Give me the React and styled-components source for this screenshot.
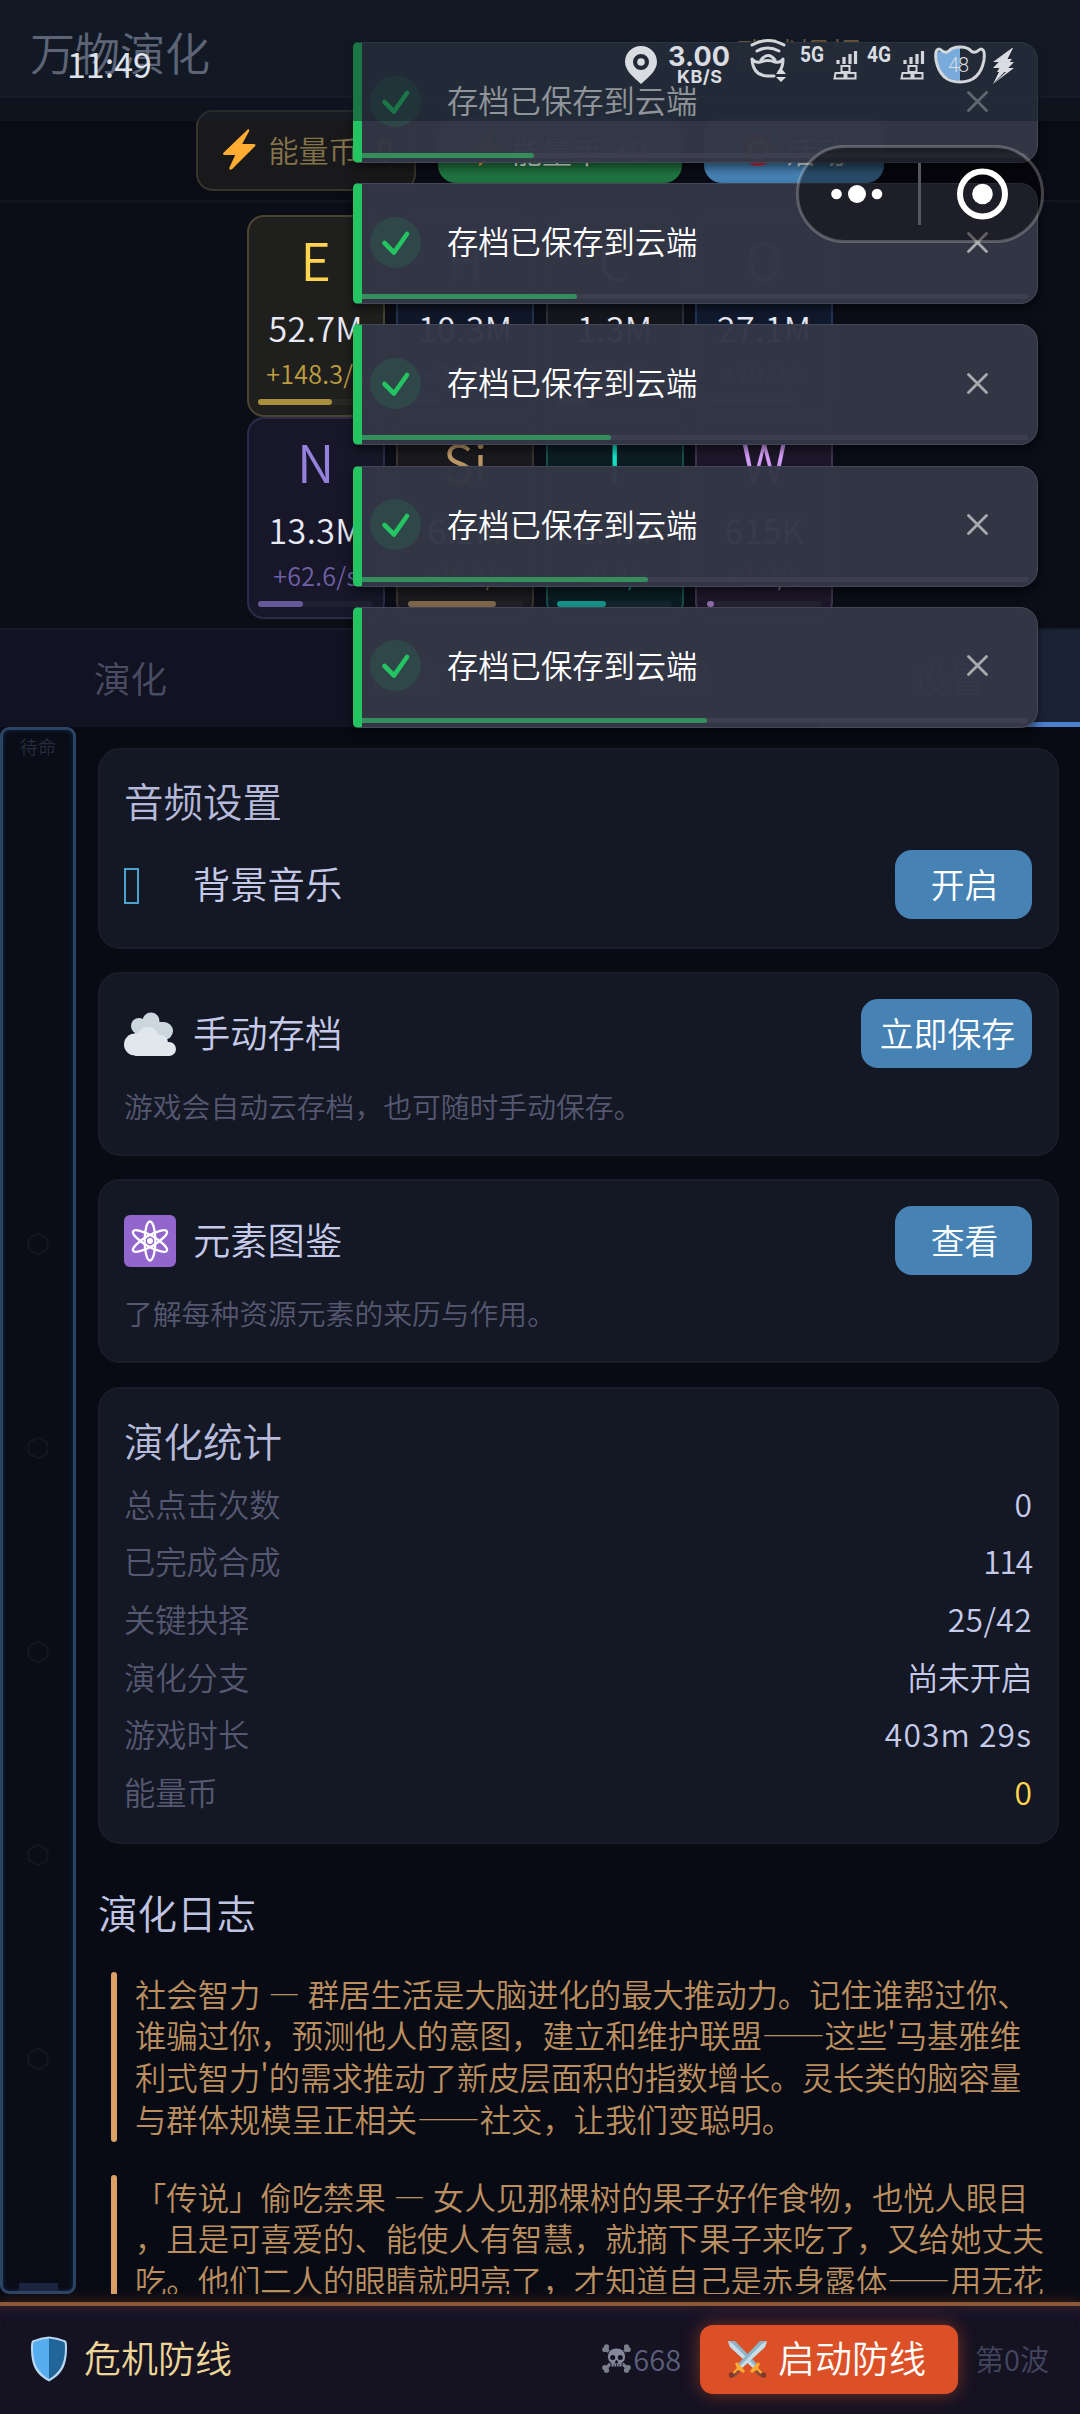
import React from "react";
import styled, { createGlobalStyle } from "styled-components";

const GlobalStyle = createGlobalStyle`
  * {
    box-sizing: border-box;
  }

  body {
    margin: 0;
    background: #080b14;
    font-family: "Noto Sans CJK SC", "Noto Sans", sans-serif;
    font-weight: 350;
  }
`;

const Page = styled.div`
  position: relative;
  display: flex;
  flex-direction: column;
  width: 1080px;
  height: 2414px;
  overflow: hidden;
  background: #080b14;
  color: #c5cae9;
`;

const Header = styled.header`
  display: flex;
  flex: none;
  align-items: center;
  justify-content: space-between;
  height: 98px;
  padding: 8px 218px 0 30px;
  background: #121421;
  border-bottom: 2px solid #191c2b;
`;

const Title = styled.div`
  font-size: 45px;
  line-height: 60px;
  color: #a0a3ba;
`;

const HeaderNote = styled.div`
  font-size: 32px;
  line-height: 44px;
  color: #b48646;
`;

const PillRow = styled.div`
  display: flex;
  flex: none;
  align-items: center;
  gap: 22px;
  height: 104px;
  padding: 2px 0 0 196px;
  background: #0a0b15;
  border-bottom: 2px solid #11131f;
`;

const Coin = styled.div`
  display: flex;
  align-items: center;
  gap: 12px;
  width: 220px;
  height: 81px;
  padding-left: 24px;
  border: 2px solid #39342a;
  border-radius: 17px;
  background: #19191b;
  color: #83734c;
  font-size: 30px;
  line-height: 40px;
  padding-bottom: 2px;
  white-space: nowrap;
`;

const CoinCount = styled.span`
  color: #ffd54f;
  margin-left: 6px;
`;

const PillButton = styled.div`
  display: flex;
  align-items: center;
  justify-content: center;
  gap: 12px;
  width: ${(p) => p.$width}px;
  height: 66px;
  border-radius: 18px;
  background: ${(p) => p.$bg};
  color: #fff;
  font-size: 30px;
  white-space: nowrap;
`;

const Resources = styled.div`
  display: grid;
  flex: none;
  grid-template-columns: repeat(4, 138px);
  grid-template-rows: 202px 202px;
  column-gap: 11.5px;
  justify-content: center;
  align-content: start;
  height: 426px;
  padding-top: 13px;
  background: #0b0d17;
`;

const ResourceCard = styled.div`
  display: flex;
  flex-direction: column;
  align-items: center;
  padding: 9px 9px 0;
  border: 2px solid ${(p) => p.$line};
  border-radius: 17px;
  background: ${(p) => p.$bg};
`;

const Symbol = styled.div`
  font-size: 52px;
  line-height: 66px;
  color: ${(p) => p.$color};
`;

const Amount = styled.div`
  margin-top: 14px;
  font-size: 34px;
  line-height: 44px;
  letter-spacing: 0.4px;
  color: #e8eaf6;
`;

const Rate = styled.div`
  margin-top: 6px;
  font-size: 25px;
  line-height: 34px;
  letter-spacing: 0.3px;
  color: ${(p) => p.$color};
  opacity: 0.7;
`;

const Track = styled.div`
  width: 115px;
  height: 6px;
  margin-top: 9px;
  border-radius: 3px;
  background: rgba(255, 255, 255, 0.04);
`;

const TrackFill = styled.div`
  height: 6px;
  border-radius: 3px;
  opacity: 0.6;
  background: ${(p) => p.$color};
`;

const Tabs = styled.nav`
  display: flex;
  flex: none;
  justify-content: space-between;
  height: 99px;
  background: #121322;
  border-top: 2px solid #171a28;
`;

const Tab = styled.div`
  width: 261px;
  text-align: center;
  font-size: 36.5px;
  line-height: 95px;
  color: ${(p) => (p.$active ? "#4a86d8" : "#4a4c62")};
  background: ${(p) => (p.$active ? "#1c2236" : "transparent")};
  border-bottom: ${(p) => (p.$active ? "5px solid #4a80cf" : "none")};
`;

const Main = styled.main`
  display: flex;
  flex: none;
  height: 1567px;
  overflow: hidden;
`;

const Rail = styled.aside`
  display: flex;
  flex: none;
  flex-direction: column;
  align-items: center;
  width: 76px;
  border: 3px solid #2b4464;
  border-radius: 9px;
  background: #0a0c17;
  box-shadow: inset 0 0 5px #142a4d;
`;

const RailLabel = styled.div`
  margin-top: 3px;
  font-size: 18px;
  line-height: 26px;
  color: #272e40;
`;

const RailMarks = styled.div`
  display: flex;
  flex: 1;
  flex-direction: column;
  align-items: center;
  gap: 179.8px;
  padding-top: 473px;
`;

const RailBase = styled.div`
  width: 39px;
  height: 8px;
  background: #1b2440;
`;

const Content = styled.section`
  flex: 1;
  padding: 21px 21px 0 22px;
`;

const Card = styled.div`
  height: ${(p) => p.$height}px;
  margin-bottom: ${(p) => p.$gap || 23.5}px;
  padding: ${(p) => p.$top}px 25px 0 24px;
  border: 2px solid #1a1d29;
  border-radius: 22px;
  background: #141724;
`;

const CardTitle = styled.div`
  font-size: 39.5px;
  line-height: 58px;
  color: #b6bbdb;
`;

const SettingRow = styled.div`
  display: flex;
  align-items: center;
  height: 69px;
  margin-top: ${(p) => p.$mt || 0}px;
`;

const IconSlot = styled.div`
  display: flex;
  width: 69px;
`;

const SettingName = styled.div`
  flex: 1;
  padding-bottom: 3px;
  font-size: 37.3px;
  line-height: 54px;
  color: #c5cae9;
`;

const ActionButton = styled.div`
  min-width: 137px;
  height: 69px;
  padding: 0 17px 0 19px;
  border-radius: 17px;
  background: #4682b4;
  color: #fff;
  text-align: center;
  font-size: 33.8px;
  line-height: 67px;
`;

const MissingGlyph = styled.div`
  width: 15px;
  height: 36px;
  margin-top: 3px;
  border: 2px solid #4ba3cf;
`;

const Hint = styled.div`
  margin-top: 18px;
  font-size: 28.8px;
  line-height: 40px;
  color: #555870;
`;

const StatRow = styled.div`
  display: flex;
  justify-content: space-between;
  font-size: 31.3px;
  line-height: 57.7px;
  color: #555870;
`;

const StatList = styled.div`
  margin-top: 6px;
`;

const StatValue = styled.span`
  font-size: 31.8px;
  color: ${(p) => p.$color || "#c5cae9"};
  letter-spacing: ${(p) => p.$spacing || 0}px;
`;

const LogTitle = styled.h2`
  margin: 40px 0 32px;
  font-size: 39.5px;
  font-weight: 350;
  line-height: 56px;
  color: #c0c5e4;
`;

const LogEntry = styled.div`
  display: flex;
  gap: 18px;
  margin: 0 0 33px 13px;
`;

const LogBar = styled.div`
  flex: none;
  width: 6px;
  border-radius: 3px;
  background: #dba066;
`;

const LogText = styled.div`
  padding: 1px 0 2px;
  font-size: 31.35px;
  line-height: 41.75px;
  word-spacing: 1px;
  white-space: nowrap;
  color: #bc8f60;
`;

const Dash = styled.span`
  font-feature-settings: "fwid", "kern" 0;
`;

const Footer = styled.footer`
  display: flex;
  flex: none;
  align-items: center;
  height: 112px;
  margin-top: 8px;
  padding: 0 31px 2px 31px;
  border-top: 4px solid #8d5837;
  background: linear-gradient(#161530, #151222 18px);
  box-shadow: 0 0 14px rgba(190, 90, 40, 0.3), inset 0 8px 10px -4px rgba(110, 40, 20, 0.25);
`;

const FooterTitle = styled.div`
  flex: 1;
  margin-left: 17px;
  padding-bottom: 5px;
  font-size: 37px;
  color: #ecd596;
`;

const Kills = styled.div`
  display: flex;
  align-items: center;
  gap: 2px;
  padding-bottom: 2px;
  font-size: 29px;
  color: #5b5f7a;
`;

const StartButton = styled.div`
  display: flex;
  align-items: center;
  justify-content: center;
  gap: 11px;
  width: 258px;
  height: 69px;
  margin: 0 17px 0 19px;
  padding: 0 4px 0 0;
  border-radius: 13px;
  background: #dc5027;
  box-shadow: 0 0 18px rgba(220, 80, 39, 0.5);
  font-size: 37px;
  color: #fff;
`;

const StartLabel = styled.span`
  padding-bottom: 5px;
`;

const Wave = styled.div`
  padding-bottom: 2px;
  font-size: 29px;
  color: #43465e;
`;

const ToastStack = styled.div`
  position: absolute;
  top: 42px;
  left: 353px;
  display: flex;
  flex-direction: column;
  gap: 20.2px;
`;

const ToastCard = styled.div`
  display: flex;
  flex-direction: column;
  width: 685px;
  height: 121px;
  border: 1.5px solid #444755;
  border-left: 9px solid #25c462;
  border-radius: 5px 18px 18px 5px;
  background: rgba(51, 54, 70, 0.975);
  box-shadow: 0 5px 10px rgba(0, 0, 0, 0.5);
`;

const ToastBody = styled.div`
  display: flex;
  flex: 1;
  align-items: center;
  padding: 6px 49px 0 8px;
`;

const CheckCircle = styled.div`
  display: flex;
  width: 51px;
  height: 51px;
  border-radius: 50%;
  background: #2f4749;
`;

const ToastText = styled.div`
  flex: 1;
  margin-left: 26px;
  padding-bottom: 2px;
  font-size: 31.3px;
  line-height: 46px;
  color: #fff;
`;

const ToastTrack = styled.div`
  height: 5px;
  margin: 0 9px 4px 0;
  border-radius: 2px;
  background: #3d3f4e;
`;

const ToastProgress = styled.div`
  height: 5px;
  border-radius: 0 3px 3px 0;
  background: #368d5c;
`;

const StatusBar = styled.div`
  position: absolute;
  top: 0;
  left: 0;
  display: flex;
  width: 1080px;
  height: 121px;
  padding-left: 67px;
  background: rgba(18, 31, 41, 0.48);
`;

const Clock = styled.div`
  margin-top: 40px;
  font-size: 34px;
  font-weight: 400;
  line-height: 48px;
  color: #dfe2e9;
`;

const Capsule = styled.div`
  position: absolute;
  top: 145px;
  left: 796px;
`;

const Bolt = ({ size = 40 }) => (
  <svg width={size * 0.84} height={size} viewBox="0 0 34 41">
    <path d="M26 0L1 24q-1 2 2 2h10L7 39q0 3 3 1l23-23q1-2-2-2H20L27 2q0-2-1-2z" fill="#ffac33" />
  </svg>
);

const Target = () => (
  <svg width="32" height="32" viewBox="0 0 32 32">
    <circle cx="16" cy="16" r="16" fill="#d22f47" />
    <circle cx="16" cy="16" r="11" fill="#f5f5f5" />
    <circle cx="16" cy="16" r="6" fill="#d22f47" />
  </svg>
);

const Cloud = () => (
  <svg width="52" height="44" viewBox="0 0 52 44">
    <g fill="#ccd6dd">
      <circle cx="27" cy="9" r="8.5" />
      <circle cx="15" cy="14" r="8" />
      <circle cx="40" cy="19" r="9" />
      <path d="M12 10h28v20H10z" />
    </g>
    <g fill="#e1e8ed">
      <circle cx="11" cy="32.500" r="11" />
      <circle cx="24" cy="26" r="11" />
      <circle cx="36" cy="31" r="8" />
      <circle cx="45" cy="37" r="7" />
      <path d="M11 28h30l4 4v12H11z" />
    </g>
  </svg>
);

const Atom = () => (
  <svg width="52" height="52" viewBox="0 0 52 52">
    <rect width="52" height="52" rx="6" fill="#9266cc" />
    <g fill="none" stroke="#fff" strokeWidth="2.3">
      <ellipse cx="26" cy="26" rx="5.4" ry="19.5" />
      <ellipse cx="26" cy="26" rx="5.4" ry="19.5" transform="rotate(60 26 26)" />
      <ellipse cx="26" cy="26" rx="5.4" ry="19.5" transform="rotate(120 26 26)" />
    </g>
    <circle cx="26" cy="26" r="3" fill="#fff" />
  </svg>
);

const Hexagon = () => (
  <svg width="24" height="24" viewBox="0 0 24 24">
    <path d="M12 1.5L21.5 7v10L12 22.5 2.5 17V7z" fill="none" stroke="#121722" strokeWidth="2" />
  </svg>
);

const Shield = () => (
  <svg width="36" height="46" viewBox="0 0 36 46">
    <path d="M18 0.5Q10 1 1.5 4.5Q0 5 0 12C0 31 6 39 18 45.5C30 39 36 31 36 12Q36 5 34.5 4.5Q26 1 18 0.5z" fill="#b8d8f2" />
    <path d="M18 2.5Q10 3 3 6Q2 6 2 12C2 29 8 37 18 43z" fill="#55acee" />
    <path d="M18 2.5Q26 3 33 6Q34 6 34 12C34 29 28 37 18 43z" fill="#226699" />
  </svg>
);

const Skull = () => (
  <svg width="29" height="29" viewBox="0 0 29 29">
    <g stroke="#7b7e8c" strokeWidth="3.2" strokeLinecap="round">
      <path d="M4 5l21 19M25 5L4 24" />
    </g>
    <g fill="#7b7e8c">
      <circle cx="4.5" cy="2.8" r="2.6" />
      <circle cx="2.8" cy="5.5" r="2.6" />
      <circle cx="24.5" cy="2.8" r="2.6" />
      <circle cx="26.2" cy="5.5" r="2.6" />
      <circle cx="4.5" cy="26.2" r="2.6" />
      <circle cx="2.8" cy="23.5" r="2.6" />
      <circle cx="24.5" cy="26.2" r="2.6" />
      <circle cx="26.2" cy="23.5" r="2.6" />
    </g>
    <path d="M14.5 4c-6 0-9 4-9 9 0 3 1.500 5 3.500 6v4h11v-4c2-1 3.500-3 3.500-6 0-5-3-9-9-9z" fill="#85889a" stroke="#151222" />
    <circle cx="10.700" cy="13.500" r="2.500" fill="#151222" />
    <circle cx="18.300" cy="13.500" r="2.500" fill="#151222" />
    <path d="M14.500 16l1.500 3h-3zM12 20v3M14.500 20v3M17 20v3" fill="#151222" stroke="#151222" strokeWidth="0.800" />
  </svg>
);

const Sword = () => (
  <>
    <path d="M0 1l7 0 22 23-4 4L2 7z" fill="#8fb4c8" />
    <path d="M0 1l5 3 22 22-2 2L2 7z" fill="#c9dde6" />
    <path d="M22 31l8-9 2 2-2 4 5 5-2 2-5-5-4 3z" fill="#ffac33" />
    <path d="M29 30l5 5-2 2-5-5z" fill="#8a4b38" />
    <circle cx="35.500" cy="35" r="2.800" fill="#7a3b2a" />
  </>
);

const Swords = () => (
  <svg width="39" height="38" viewBox="0 0 39 38">
    <Sword />
    <g transform="matrix(-1 0 0 1 39 0)">
      <Sword />
    </g>
  </svg>
);

const StatusIcons = styled.svg`
  position: absolute;
  top: 24px;
  left: 620px;
`;

const Signal = ({ x }) => (
  <g transform={`translate(${x} 0)`}>
    <path d="M4 40v-4M10 40v-7M16 40v-10M21.500 40V27" stroke="#d3d6db" strokeWidth="3.200" fill="none" />
    <path d="M7.500 42h8v6h-8zM1.500 49h9v5.500h-10zM12.500 49h9v5.500h-9z" stroke="#d3d6db" strokeWidth="2" fill="none" />
  </g>
);

const StatusGlyphs = () => (
  <StatusIcons width="410" height="68" viewBox="0 0 410 68" fontFamily="Roboto" fontWeight="700" fill="#d9dce0">
    <path fillRule="evenodd" d="M21 22c-9 0-16 7-16 16 0 8 8 15 16 22 8-7 16-14 16-22 0-9-7-16-16-16zm0 8a8 8 0 1 1 0 16 8 8 0 0 1 0-16z" />
    <circle cx="21" cy="38" r="3.800" />
    <text x="48" y="42" fontSize="27" textLength="62" fontFamily="Inter">3.00</text>
    <text x="57" y="58.500" fontSize="18" textLength="45" fontFamily="Inter">KB/S</text>
    <g fill="none" stroke="#d3d6db" strokeWidth="3" strokeLinecap="round">
      <path d="M132 21q16-9 32 0M137 27q11-6 22 0M141 36q7-9 14 0" />
      <path d="M132 35q3 4 8 3 8-3 15 0 6 1 8-3M132 35q1 17 16 17h6M163 36q0 7-4 12" />
    </g>
    <path d="M161 44l5 6h-10zM161 58l-5-5h10z" />
    <text x="180" y="38" fontSize="21.500" textLength="24" lengthAdjust="spacingAndGlyphs">5G</text>
    <Signal x={214} />
    <text x="247" y="38" fontSize="21.500" textLength="24" lengthAdjust="spacingAndGlyphs">4G</text>
    <Signal x={281} />
    <path d="M317 27q7 2 12-1 3-3 11-3v34q-20-2-24-20-2-8 1-10z" fill="#78aadc" />
    <path
      d="M317 26q2-2 4 0 4 4 8 1 3-4 11-4t11 4q4 3 8-1 2-2 4 0 2 2 1 10-4 22-24 22t-24-22q-1-8 1-10z"
      fill="none"
      stroke="#d3d6db"
      strokeWidth="3"
    />
    <text x="328" y="48" fontSize="20" fontWeight="300" textLength="21">48</text>
    <path d="M392 24l-19 20h8l-8 16 21-22h-8l7-14z" />
    <path d="M392 24l-19 14h10l-6 10h9l-13 12 21-16h-9l7-9h-9z" />
  </StatusIcons>
);

const resources = [
  { symbol: "E", color: "#ffd54f", line: "#4a4430", bg: "#1f1f1e", amount: "52.7M", rate: "+148.3/s", fill: 74 },
  { symbol: "H", color: "#64b5f6", line: "#23344f", bg: "#11182a", amount: "10.3M", rate: "+34.1/s", fill: 30 },
  { symbol: "C", color: "#90a4ae", line: "#2c3038", bg: "#15171e", amount: "1.3M", rate: "+12.5/s", fill: 30 },
  { symbol: "O", color: "#42a5f5", line: "#24365a", bg: "#111a2e", amount: "27.1M", rate: "+70.0/s", fill: 90 },
  { symbol: "N", color: "#9580dc", line: "#2d2b48", bg: "#171729", amount: "13.3M", rate: "+62.6/s", fill: 45 },
  { symbol: "Si", color: "#bc9868", line: "#3a342f", bg: "#1b1a1e", amount: "6.1M", rate: "+20.2/s", fill: 88 },
  { symbol: "I", color: "#14e0c8", line: "#135049", bg: "#0c1d24", amount: "2.4M", rate: "+8.8/s", fill: 49 },
  { symbol: "W", color: "#d59cf8", line: "#41324f", bg: "#1d182a", amount: "615K", rate: "+1.2/s", fill: 7 },
];

const stats = [
  { label: "总点击次数", value: "0" },
  { label: "已完成合成", value: "114", spacing: -1.2 },
  { label: "关键抉择", value: "25/42", spacing: 0.4 },
  { label: "演化分支", value: "尚未开启", spacing: -0.5 },
  { label: "游戏时长", value: "403m 29s", spacing: 1.1 },
  { label: "能量币", value: "0", color: "#ffd54f" },
];

const logs = [
  [
    "社会智力 — 群居生活是大脑进化的最大推动力。记住谁帮过你、",
    "谁骗过你，预测他人的意图，建立和维护联盟——这些'马基雅维",
    "利式智力'的需求推动了新皮层面积的指数增长。灵长类的脑容量",
    "与群体规模呈正相关——社交，让我们变聪明。",
  ],
  [
    "「传说」偷吃禁果 — 女人见那棵树的果子好作食物，也悦人眼目",
    "，且是可喜爱的、能使人有智慧，就摘下果子来吃了，又给她丈夫",
    "吃。他们二人的眼睛就明亮了，才知道自己是赤身露体——用无花",
    "果树的叶子，为自己编作裙子。",
  ],
];

const toastProgress = [172, 215, 249, 286, 345];

function Resource({ item }) {
  return (
    <ResourceCard $line={item.line} $bg={item.bg}>
      <Symbol $color={item.color}>{item.symbol}</Symbol>
      <Amount>{item.amount}</Amount>
      <Rate $color={item.color}>{item.rate}</Rate>
      <Track>
        <TrackFill $color={item.color} style={{ width: item.fill }} />
      </Track>
    </ResourceCard>
  );
}

// keeps the long dashes as wide as the characters around them
function LogLine({ text }) {
  return (
    <div>
      {text.split(/(—+)/).map((part, i) => (part[0] === "—" ? <Dash key={i}>{part}</Dash> : part))}
    </div>
  );
}

function Toast({ progress }) {
  return (
    <ToastCard>
      <ToastBody>
        <CheckCircle>
          <svg width="51" height="51" viewBox="0 0 51 51" fill="none">
            <path d="M14.500 26L24 35.500 37 17" stroke="#25c462" strokeWidth="4.600" strokeLinecap="round" strokeLinejoin="round" />
          </svg>
        </CheckCircle>
        <ToastText>存档已保存到云端</ToastText>
        <svg width="21" height="21" viewBox="0 0 21 21">
          <path d="M1.500 1.500l18 18M19.500 1.500l-18 18" stroke="#a9aaae" strokeWidth="2.800" strokeLinecap="round" />
        </svg>
      </ToastBody>
      <ToastTrack>
        <ToastProgress style={{ width: progress }} />
      </ToastTrack>
    </ToastCard>
  );
}

export default function App() {
  return (
    <Page lang="zh-CN">
      <GlobalStyle />
      <Header>
        <Title>万物演化</Title>
        <HeaderNote>武战提报</HeaderNote>
      </Header>

      <PillRow>
        <Coin>
          <Bolt size={41} />
          <span>能量币</span>
          <CoinCount>0</CoinCount>
        </Coin>
        <PillButton $width={244} $bg="#1f7440">
          <Bolt size={32} />
          <span>能量币</span>
          <span>+0</span>
        </PillButton>
        <PillButton $width={180} $bg="#4682b4">
          <Target />
          <span>活动</span>
        </PillButton>
      </PillRow>

      <Resources>
        {resources.map((item) => (
          <Resource key={item.symbol} item={item} />
        ))}
      </Resources>

      <Tabs>
        <Tab>演化</Tab>
        <Tab>合成</Tab>
        <Tab>抉择</Tab>
        <Tab $active>设置</Tab>
      </Tabs>

      <Main>
        <Rail>
          <RailLabel>待命</RailLabel>
          <RailMarks>
            {[0, 1, 2, 3, 4].map((i) => (
              <Hexagon key={i} />
            ))}
          </RailMarks>
          <RailBase />
        </Rail>

        <Content>
          <Card $height={201} $top={21} $gap={23}>
            <CardTitle>音频设置</CardTitle>
            <SettingRow $mt={21}>
              <IconSlot>
                <MissingGlyph />
              </IconSlot>
              <SettingName>背景音乐</SettingName>
              <ActionButton>开启</ActionButton>
            </SettingRow>
          </Card>

          <Card $height={183.5} $top={25}>
            <SettingRow>
              <IconSlot>
                <Cloud />
              </IconSlot>
              <SettingName>手动存档</SettingName>
              <ActionButton>立即保存</ActionButton>
            </SettingRow>
            <Hint>游戏会自动云存档，也可随时手动保存。</Hint>
          </Card>

          <Card $height={184} $top={25}>
            <SettingRow>
              <IconSlot>
                <Atom />
              </IconSlot>
              <SettingName>元素图鉴</SettingName>
              <ActionButton>查看</ActionButton>
            </SettingRow>
            <Hint>了解每种资源元素的来历与作用。</Hint>
          </Card>

          <Card $height={457} $top={22}>
            <CardTitle>演化统计</CardTitle>
            <StatList>
              {stats.map((s) => (
                <StatRow key={s.label}>
                  <span>{s.label}</span>
                  <StatValue $color={s.color} $spacing={s.spacing}>
                    {s.value}
                  </StatValue>
                </StatRow>
              ))}
            </StatList>
          </Card>

          <LogTitle>演化日志</LogTitle>
          {logs.map((lines) => (
            <LogEntry key={lines[0]}>
              <LogBar />
              <LogText>
                {lines.map((line) => (
                  <LogLine key={line} text={line} />
                ))}
              </LogText>
            </LogEntry>
          ))}
        </Content>
      </Main>

      <Footer>
        <Shield />
        <FooterTitle>危机防线</FooterTitle>
        <Kills>
          <Skull />
          668
        </Kills>
        <StartButton>
          <Swords />
          <StartLabel>启动防线</StartLabel>
        </StartButton>
        <Wave>第0波</Wave>
      </Footer>

      <ToastStack>
        {toastProgress.map((progress) => (
          <Toast key={progress} progress={progress} />
        ))}
      </ToastStack>

      <StatusBar>
        <Clock>11:49</Clock>
        <StatusGlyphs />
      </StatusBar>

      <Capsule>
        <svg width="248" height="98" viewBox="0 0 248 98">
          <rect x="1.500" y="1.500" width="245" height="95" rx="47.500" fill="rgba(0,0,0,0.42)" stroke="rgba(255,255,255,0.24)" strokeWidth="3" />
          <path d="M123.500 18v62" stroke="#55575f" strokeWidth="3" />
          <g fill="#fff">
            <circle cx="40.500" cy="49" r="5.300" />
            <circle cx="61" cy="49" r="9" />
            <circle cx="81" cy="49" r="5.300" />
            <circle cx="186.500" cy="49" r="10.300" />
          </g>
          <circle cx="186.500" cy="49" r="22.500" fill="none" stroke="#fff" strokeWidth="6" />
        </svg>
      </Capsule>
    </Page>
  );
}
